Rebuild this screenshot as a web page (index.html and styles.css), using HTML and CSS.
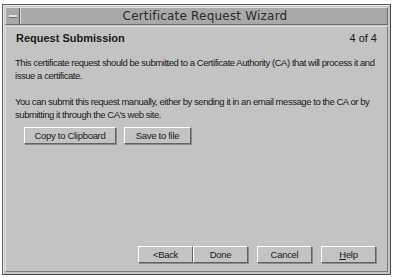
FILE: index.html
```html
<!DOCTYPE html>
<html lang="en">
<head>
  <meta charset="UTF-8" />
  <title>Certificate Request Wizard</title>
  <link rel="stylesheet" href="styles.css">
</head>
<body>
  <div class="window">
    <div class="titlebar">
      <div class="menu-btn"><span></span></div>
      <div class="title">Certificate Request Wizard</div>
    </div>
    <div class="panel">
      <div class="heading">
        <h1>Request Submission</h1>
        <span class="step">4 of 4</span>
      </div>
      <p>This certificate request should be submitted to a Certificate Authority (CA) that will process it and issue a certificate.</p>
      <p>You can submit this request manually, either by sending it in an email message to the CA or by submitting it through the CA's web site.</p>
      <div class="actions">
        <button class="btn btn-copy">Copy to Clipboard</button>
        <button class="btn btn-save">Save to file</button>
      </div>
      <div class="footer">
        <button class="btn">&lt;Back</button>
        <button class="btn">Done</button>
        <button class="btn gap">Cancel</button>
        <button class="btn gap"><u>H</u>elp</button>
      </div>
    </div>
  </div>
</body>
</html>
```

FILE: styles.css
```css
body {
  margin: 0;
  background-color: #ffffff;
  font-family: 'Liberation Sans', Arial, sans-serif;
  color: #1a1a1a;
}
.window {
  width: 383px;
  height: 265px;
  margin: 4px 0 0 2px;
  border: 1px solid #5e5e5e;
  border-right-color: #4a4a4a;
  border-bottom-color: #4a4a4a;
  padding: 2px;
  background-color: #c6c6c6;
  box-shadow: inset 1px 1px 0 #e8e8e8;
  display: flex;
  flex-direction: column;
}
.titlebar {
  height: 16px;
  display: flex;
  border: 1px solid #707070;
  border-top-color: #e0e0e0;
  border-left-color: #e0e0e0;
  background-color: #a9a9a9;
}
.menu-btn {
  width: 13px;
  border-right: 1px solid #5a5a5a;
  display: flex;
  align-items: center;
  justify-content: center;
}
.menu-btn span {
  width: 8px;
  height: 2px;
  background-color: #e4e4e4;
  border-bottom: 1px solid #6a6a6a;
}
.title {
  flex: 1;
  text-align: center;
  font-family: 'DejaVu Sans', sans-serif;
  font-size: 12px;
  line-height: 16px;
  color: #2a2a2a;
  letter-spacing: 0.2px;
  padding-left: 2px;
  border-left: 1px solid #dcdcdc;
}
.panel {
  flex: 1;
  margin-top: 1px;
  padding: 5px 6px 4px 9px;
  border: 1px solid #e4e4e4;
  border-right-color: #7a7a7a;
  border-bottom-color: #7a7a7a;
  background-color: #c3c3c3;
  display: flex;
  flex-direction: column;
  font-size: 9.5px;
  letter-spacing: -0.45px;
}
.heading {
  display: flex;
  justify-content: space-between;
  align-items: baseline;
  margin-bottom: 12px;
  padding-left: 1px;
}
.heading h1 {
  margin: 0;
  font-size: 11px;
  font-weight: bold;
  letter-spacing: 0;
}
.step {
  font-size: 11px;
  letter-spacing: 0;
  margin-right: 4px;
}
p {
  margin: 0 0 13px 0;
  line-height: 13px;
}
.btn {
  font-family: 'Liberation Sans', Arial, sans-serif;
  font-size: 9.5px;
  letter-spacing: -0.3px;
  color: #1a1a1a;
  background-color: #c3c3c3;
  height: 17px;
  padding: 0;
  border: 1px solid #ffffff;
  border-right-color: #646464;
  border-bottom-color: #646464;
  box-shadow: 1px 1px 0 #8a8a8a;
}
.actions {
  display: flex;
  gap: 8px;
  margin-top: -7px;
  padding-left: 9px;
}
.btn-copy {
  width: 92px;
}
.btn-save {
  width: 67px;
}
.footer {
  margin-top: auto;
  margin-bottom: 4px;
  display: flex;
  justify-content: flex-end;
  margin-right: 5px;
}
.footer .btn {
  width: 55px;
}
.footer .gap {
  margin-left: 9px;
}
```
